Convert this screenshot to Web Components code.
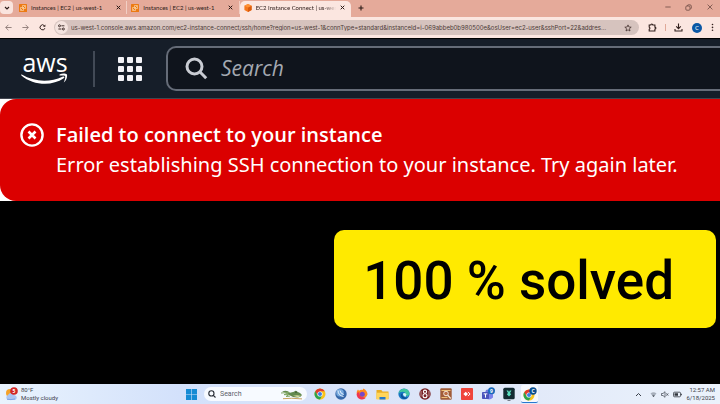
<!DOCTYPE html>
<html lang="en">
<head>
<meta charset="utf-8">
<title>EC2 Instance Connect | us-west-1</title>
<style>
  html, body {
    margin: 0;
    height: 100%;
    background: #000;
    overflow: hidden;
  }
</style>
</head>
<body>
<app-screen></app-screen>

<script>
  const screenTemplate = {
    template: `
    <style>
      :host {
        display: flex;
        flex-direction: column;
        min-height: 100vh;
        background: #000;
        font-family: "Noto Sans", "Open Sans", sans-serif;
      }
      main {
        flex: 1;
        display: flex;
        flex-direction: column;
      }
      solved-banner {
        align-self: flex-end;
        margin: 29px 4px 0 0;
      }
    </style>
    <tab-strip>
      <browser-tab>Instances | EC2 | us-west-1</browser-tab>
      <browser-tab>Instances | EC2 | us-west-1</browser-tab>
      <browser-tab active>EC2 Instance Connect | us-west-1</browser-tab>
    </tab-strip>
    <browser-toolbar></browser-toolbar>
    <console-header></console-header>
    <main>
      <error-flash>
        <span slot="title">Failed to connect to your instance</span>
        Error establishing SSH connection to your instance. Try again later.
      </error-flash>
      <solved-banner>100 % solved</solved-banner>
    </main>
    <task-bar></task-bar>
    `
  };

  const buttonStyle = `
      button {
        display: grid;
        place-items: center;
        padding: 0;
        border: 0;
        background: none;
        color: inherit;
        font: inherit;
        flex: none;
      }
      svg { display: block; }
  `;

  const tabStripTemplate = {
    template: `
    <style>
      ${buttonStyle}
      :host {
        display: flex;
        align-items: stretch;
        height: 17px;
        background: #e5aa9a;
        color: #2b1a17;
      }
      .search-tabs {
        width: 13px;
        height: 13px;
        border-radius: 4px;
        background: #fae4de;
        margin: 1px 2px 0 0;
      }
      .tabs {
        display: flex;
        flex: 0 1 336px;
        min-width: 0;
      }
      .new-tab { width: 20px; margin-top: -2px; }
      .window-buttons {
        display: flex;
        margin-left: auto;
        height: 14px;
        color: #6c4a42;
      }
      .window-buttons button { width: 21px; }
    </style>
    <button class="search-tabs" aria-label="Search tabs">
      <svg width="6" height="6" viewBox="0 0 6 6" fill="none" stroke="currentColor" stroke-width="1.1"><path d="M1 2l2 2 2-2"/></svg>
    </button>
    <div class="tabs"><slot></slot></div>
    <button class="new-tab" aria-label="New tab">
      <svg width="6" height="6" viewBox="0 0 6 6" stroke="currentColor" stroke-width="1.1"><path d="M3 .5v5M.5 3h5"/></svg>
    </button>
    <div class="window-buttons">
      <button aria-label="Minimize"><svg width="6" height="6" viewBox="0 0 6 6" stroke="currentColor" stroke-width=".8"><path d="M.3 3h5.4"/></svg></button>
      <button aria-label="Restore"><svg width="7" height="7" viewBox="0 0 7 7" fill="none" stroke="currentColor" stroke-width=".8"><rect x=".8" y="2" width="4.2" height="4.2" rx="1"/><path d="M2.4 1.8q0-1 1-1h1.4q1.6 0 1.6 1.6v1.4q0 1-1 1"/></svg></button>
      <button aria-label="Close window"><svg width="6" height="6" viewBox="0 0 6 6" stroke="currentColor" stroke-width=".8"><path d="M.6.6l4.8 4.8M5.4.6L.6 5.4"/></svg></button>
    </div>
    `
  };

  const browserTabTemplate = {
    template: `
    <style>
      ${buttonStyle}
      :host {
        display: flex;
        align-items: center;
        flex: 1 1 0;
        min-width: 0;
        box-sizing: border-box;
        height: 13px;
        margin-top: 1px;
        padding: 0 5px 0 4px;
        gap: 4px;
        border-right: 1px solid #f2cfc5;
        font: 6px Lato, sans-serif;
      }
      :host([active]) {
        height: 16px;
        padding-bottom: 3px;
        border-right: 0;
        border-radius: 5px 5px 0 0;
        background: #fbe6e0;
      }
      .title {
        flex: 1;
        min-width: 0;
        overflow: hidden;
        white-space: nowrap;
      }
      :host([active]) .title {
        mask-image: linear-gradient(to right, #000 85%, transparent);
      }
      .cube, :host([active]) .chip { display: none; }
      :host([active]) .cube { display: block; }
      .icon { flex: none; }
      .close { width: 6px; }
    </style>
    <svg class="icon chip" width="8" height="8" viewBox="0 0 8 8"><rect width="8" height="8" rx=".6" fill="#ec7a12"/><path d="M1.5 6.5v-3h3v3zM3.5 3.5v-2h3v3h-2M2 6l4-4" fill="none" stroke="#ffe2bd" stroke-width=".6"/></svg>
    <svg class="icon cube" width="8" height="8" viewBox="0 0 8 8"><path d="M4 0l3.600 1.800v4.300L4 8 .4 6.100V1.800z" fill="#f5761c"/><path d="M4 3.600l3.600-1.800v4.300L4 8z" fill="#d95b0e"/><path d="M4 0l3.600 1.800L4 3.600.4 1.800z" fill="#ff9236"/></svg>
    <span class="title"><slot></slot></span>
    <button class="close" aria-label="Close tab">
      <svg width="5" height="5" viewBox="0 0 5 5" stroke="currentColor" stroke-width="1"><path d="M.7.7l3.6 3.6M4.3.7L.7 4.3"/></svg>
    </button>
    `
  };

  const toolbarTemplate = {
    template: `
    <style>
      ${buttonStyle}
      :host {
        display: flex;
        align-items: center;
        height: 21px;
        padding-right: 1px;
        background: #fbe6e0;
        border-bottom: 1px solid #000;
        color: #33211e;
      }
      .nav { width: 17px; }
      .faded { color: #7d6b67; }
      .address {
        display: flex;
        align-items: center;
        flex: 1;
        min-width: 0;
        height: 15px;
        margin: 0 4px 0 3px;
        padding: 0 7px 0 1px;
        gap: 3px;
        border-radius: 8px;
        background: #d6c3be;
      }
      .site-info {
        width: 13px;
        height: 13px;
        border-radius: 50%;
        background: #f4e3de;
      }
      input {
        flex: 1;
        min-width: 0;
        padding: 0;
        border: 0;
        outline: 0;
        background: none;
        color: #4c3a36;
        font: 6px Inter, sans-serif;
        text-overflow: ellipsis;
      }
      .tool { width: 19px; }
      hr {
        width: 1px;
        height: 7px;
        margin: 0 3px;
        border: 0;
        background: #e0a999;
      }
      .avatar {
        width: 10px;
        height: 10px;
        margin: 0 4px;
        border-radius: 50%;
        background: #0b57a4;
        color: #fff;
        font: 6px "Noto Sans", sans-serif;
        line-height: 10px;
      }
      .menu { width: 13px; }
    </style>
    <button class="nav faded" aria-label="Back"><svg width="7" height="7" viewBox="0 0 7 7" fill="none" stroke="currentColor" stroke-width=".8"><path d="M6.6 3.5H.8M3.4.8L.7 3.5l2.7 2.7"/></svg></button>
    <button class="nav faded" aria-label="Forward"><svg width="7" height="7" viewBox="0 0 7 7" fill="none" stroke="currentColor" stroke-width=".8"><path d="M.4 3.5h5.8M3.6.8l2.7 2.7-2.7 2.7"/></svg></button>
    <button class="nav" aria-label="Reload"><svg width="7" height="7" viewBox="0 0 7 7" fill="none" stroke="currentColor" stroke-width="1"><path d="M5.900 4.200a2.500 2.500 0 1 1-.5-2.500"/><path d="M6.400.4v2.400H4z" fill="currentColor" stroke="none"/></svg></button>
    <div class="address">
      <button class="site-info" aria-label="View site information"><svg width="7" height="7" viewBox="0 0 7 7" fill="none" stroke="currentColor" stroke-width=".9"><circle cx="1.5" cy="1.8" r="1"/><path d="M3.4 1.8h3M.4 5h3"/><circle cx="5.4" cy="5" r="1"/></svg></button>
      <input type="text" aria-label="Address" readonly value="us-west-1.console.aws.amazon.com/ec2-instance-connect/ssh/home?region=us-west-1&amp;connType=standard&amp;instanceId=i-069abbeb0b980500e&amp;osUser=ec2-user&amp;sshPort=22&amp;addres...">
      <button aria-label="Bookmark this page"><svg width="8" height="8" viewBox="0 0 8 8" fill="none" stroke="currentColor" stroke-width=".7"><path d="M4 .9l.9 2.1 2.3.2-1.8 1.5.6 2.3-2-1.2L2 7l.6-2.3L.8 3.2 3.1 3z"/></svg></button>
    </div>
    <button class="tool" aria-label="Extensions"><svg width="9" height="9" viewBox="0 0 9 9" fill="none" stroke="currentColor" stroke-width="1.100"><path d="M1.200 2h1.600a1 1 0 0 1 2 0h2.100v2.100a1 1 0 0 1 0 2v1.900H1.200V6.300a1.200 1.200 0 0 0 0-2.200z"/></svg></button>
    <hr>
    <button class="tool" aria-label="Downloads"><svg width="9" height="9" viewBox="0 0 9 9" fill="none" stroke="currentColor" stroke-width="1.100"><path d="M4.500.5v5M2.200 3.300l2.300 2.300 2.300-2.300M1 6v2h7V6"/></svg></button>
    <button class="avatar" aria-label="Profile">C</button>
    <button class="menu" aria-label="Menu"><svg width="3" height="9" viewBox="0 0 3 9" fill="currentColor"><circle cx="1.500" cy="1.500" r=".8"/><circle cx="1.500" cy="4.400" r=".8"/><circle cx="1.500" cy="7.300" r=".8"/></svg></button>
    `
  };

  const consoleHeaderTemplate = {
    template: `
    <style>
      ${buttonStyle}
      :host {
        display: flex;
        align-items: center;
        height: 59px;
        padding-left: 21px;
        background: #161e29;
        border-bottom: 1px solid #424650;
        color: #fff;
      }
      .logo {
        display: flex;
        flex-direction: column;
        align-items: center;
        width: 48px;
        color: #fff;
        text-decoration: none;
        font: 500 25px "Open Sans", "Noto Sans", sans-serif;
        line-height: 20px;
      }
      .logo svg { margin-top: 1px; }
      .divider {
        width: 2px;
        height: 36px;
        margin: 0 22px 0 24px;
        background: #424a56;
      }
      .search {
        display: flex;
        align-items: center;
        flex: 1;
        min-width: 0;
        height: 41px;
        margin: 0 0 1px 23px;
        padding-left: 17px;
        gap: 13px;
        border: 2px solid #656c78;
        border-right: 0;
        border-radius: 10px 0 0 10px;
        background: #0f141c;
      }
      input {
        flex: 1;
        min-width: 0;
        padding: 0;
        border: 0;
        outline: 0;
        background: none;
        color: #fff;
        font: italic 21px "Open Sans", "Noto Sans", sans-serif;
      }
      input::placeholder { color: #a4a9b1; opacity: 1; }
    </style>
    <a class="logo" href="#" aria-label="AWS home">
      aws
      <svg width="48" height="12" viewBox="0 0 48 12"><path d="M.8 1.500C13 9 29 9.500 41.500 3.700c1.800-.7 2.600.5 1.200 1.600C31 13.500 12 12.500.4 2.400c-.5-.6-.2-1.200.4-.9z" fill="#fff"/><path d="M38.500 1.500c2.800-1.400 6.300-1 7.200-.2 1 1.200.2 5.900-2.900 8.300 1.300-3 1.700-5.700 1.300-6.500-.6-.7-3-.8-5.600-.6z" fill="#fff"/></svg>
    </a>
    <div class="divider"></div>
    <button aria-label="Services">
      <svg width="26" height="26" viewBox="0 0 26 26" fill="#f3f3f7"><g id="row"><rect x="1" y="1" width="6" height="6" rx="1"/><rect x="10" y="1" width="6" height="6" rx="1"/><rect x="19" y="1" width="6" height="6" rx="1"/></g><use href="#row" y="9"/><use href="#row" y="18"/></svg>
    </button>
    <label class="search">
      <svg width="23" height="23" viewBox="0 0 23 23" fill="none" stroke="#c9ccd3" stroke-width="3"><circle cx="9.500" cy="9.500" r="7.500"/><path d="M14.800 14.800l6.400 6.400"/></svg>
      <input type="search" placeholder="Search" aria-label="Search">
    </label>
    `
  };

  const errorFlashTemplate = {
    template: `
    <style>
      :host {
        display: block;
        background: #fff;
      }
      .flash {
        display: flex;
        align-items: flex-start;
        gap: 12px;
        padding: 21px 20px;
        border-radius: 16px 0 0 16px;
        background: #db0000;
        color: #fff;
        font-size: 20px;
        line-height: 30px;
      }
      svg { flex: none; margin-top: 3px; }
      .title { display: block; font-family: "Open Sans", "Noto Sans", sans-serif; font-weight: 600; }
      .text { margin: 0; }
      .title, .text { white-space: nowrap; }
    </style>
    <div class="flash" role="alert">
      <svg width="24" height="24" viewBox="0 0 24 24" fill="none" stroke="#fff"><circle cx="12" cy="12" r="10.600" stroke-width="2.400"/><path d="M8.500 8.500l7 7M15.500 8.500l-7 7" stroke-width="2.600"/></svg>
      <div>
        <strong class="title"><slot name="title"></slot></strong>
        <p class="text"><slot></slot></p>
      </div>
    </div>
    `
  };

  const solvedBannerTemplate = {
    template: `
    <style>
      :host {
        display: block;
        padding: 19px 42px 15px 29px;
        border-radius: 10px;
        background: #ffea00;
        color: #000;
        font: 500 53px Roboto, sans-serif;
        line-height: 64px;
        white-space: nowrap;
      }
    </style>
    <slot></slot>
    `
  };

  const chromeShapes = `
      <circle cx="6" cy="6" r="5.500" fill="#f9c31c"/>
      <path d="M1.200 3.300A5.500 5.500 0 0 1 10.800 3.300H6L3.700 7.400z" fill="#e23b2e"/>
      <path d="M1.200 3.300A5.500 5.500 0 0 0 6 11.500L8.300 7.300 3.700 7.400z" fill="#2da44e"/>
      <circle cx="6" cy="6" r="2.600" fill="#fff"/><circle cx="6" cy="6" r="2" fill="#3b7de8"/>`;

  const taskBarTemplate = {
    template: `
    <style>
      ${buttonStyle}
      :host {
        display: grid;
        grid-template-columns: 1fr auto 1fr;
        align-items: center;
        height: 20px;
        padding: 0 5px;
        background: linear-gradient(to right, #e9f3fd, #d3e1fb 25%, #dde5f8 60%, #ebf2fb);
        color: #3a404a;
        font: 6px Roboto, sans-serif;
        line-height: 8px;
      }
      .weather {
        display: flex;
        align-items: center;
        gap: 3px;
        text-align: left;
        justify-self: start;
      }
      .weather span { display: block; }
      .apps { display: flex; gap: 4px; padding-left: 1px; }
      .apps button {
        width: 17px;
        height: 18px;
        border-radius: 2px;
      }
      .apps .current { background: #f6f8fd; border-bottom: 1px solid #2878cf; }
      .search {
        display: flex;
        align-items: center;
        align-self: center;
        box-sizing: border-box;
        width: 103px;
        height: 14px;
        padding: 0 4px;
        gap: 4px;
        border-radius: 7px;
        background: #f7faff;
      }
      input {
        flex: 1;
        min-width: 0;
        padding: 0;
        border: 0;
        outline: 0;
        background: none;
        font: 7px Roboto, sans-serif;
      }
      input::placeholder { color: #5a5f69; opacity: 1; }
      .tray {
        display: flex;
        align-items: center;
        justify-self: end;
        gap: 4px;
      }
      .overflow { margin-right: 4px; }
      .clock { text-align: right; }
      .clock time { display: block; }
      text { font: 700 5px "Noto Sans", sans-serif; fill: #fff; text-anchor: middle; }
    </style>
    <button class="weather">
      <svg width="13" height="14" viewBox="0 0 13 14"><circle cx="5" cy="6" r="4" fill="#f5a32a"/><path d="M3 13a2.700 2.700 0 0 1 0-5 3.600 3.600 0 0 1 6.600.3A2.400 2.400 0 0 1 10 13z" fill="#a9c5f3"/><path d="M2 12.200q4 1 8-.3" stroke="#7da4e5" fill="none"/><circle cx="9" cy="4" r="3.800" fill="#d12727"/><text x="9" y="6">5</text></svg>
      <span><span>80°F</span><span>Mostly cloudy</span></span>
    </button>
    <nav class="apps">
      <button aria-label="Start"><svg width="11" height="11" viewBox="0 0 11 11" fill="#168bd4"><path d="M0 0h5.200v5.200H0zM5.800 0H11v5.200H5.800zM0 5.800h5.200V11H0zM5.800 5.800H11V11H5.800z"/></svg></button>
      <label class="search">
        <svg width="8" height="8" viewBox="0 0 8 8" fill="none" stroke="#252a33" stroke-width="1.100"><circle cx="3.400" cy="3.400" r="2.600"/><path d="M5.300 5.300l2.200 2.200"/></svg>
        <input type="search" placeholder="Search" aria-label="Search apps">
        <svg width="22" height="11" viewBox="0 0 22 11"><path d="M1 2.500q5-2 8 1.200l4-.9q2-2 3.400 0 3 .8 4.600 3.200-1 2-4 2.500-5 .3-8-2Q5 3 1 2.500z" fill="#648a50"/><path d="M0 4l8-.5-5 2.200 5-.2-3 2 4-.4" fill="none" stroke="#80a765"/><path d="M12 6.700q4-1 8 .1l-3 1.400z" fill="#d7dba0"/><path d="M2 9.700q8-1 19 .2" stroke="#c8a25e" fill="none"/><circle cx="15" cy="3.200" r=".6" fill="#24351e"/></svg>
      </label>
      <button aria-label="Chrome"><svg width="12" height="12" viewBox="0 0 12 12">${chromeShapes}</svg></button>
      <button aria-label="Remote"><svg width="12" height="12" viewBox="0 0 12 12"><circle cx="6" cy="6" r="5.700" fill="#3768a9"/><circle cx="5" cy="4.700" r="3.800" fill="#78a9dd"/><path d="M3 2.500q.2 5.200 5.500 6M5 2.500q.3 3 3.700 4" fill="none" stroke="#e3f1ff" stroke-width="1"/></svg></button>
      <button aria-label="Firefox"><svg width="12" height="12" viewBox="0 0 12 12"><path d="M1 3l1-1.500 1 1.200Q5 1.500 6.500 2L7.500.5Q11.600 3 11.500 6.500A5.500 5.500 0 1 1 1 3z" fill="#ff8a1e"/><path d="M.6 6.500Q1 3.500 3.500 4.500q-1 5 6.500 5.300A5.500 5.500 0 0 1 .6 6.500z" fill="#ef3550"/><circle cx="6.300" cy="6.300" r="2.500" fill="#7646c9"/></svg></button>
      <button aria-label="File Explorer"><svg width="13" height="11" viewBox="0 0 13 11"><path d="M.5 1h4.800l1.200 1.400h6V10H.5z" fill="#e9ac22"/><path d="M.5 3.700h12v6.800H.5z" fill="#ffd55a"/><path d="M3.500 8h6v2.500h-6z" fill="#2779c9"/></svg></button>
      <button aria-label="Edge"><svg width="12" height="12" viewBox="0 0 12 12"><circle cx="6" cy="6" r="5.600" fill="#1778c3"/><path d="M.5 5.500C1.500-.8 10.600-1 11.500 5q.3 3-2.700 3-2.600 0-1.400-2Q7.300 3.700 4.800 3.700 1.500 3.700.5 5.500z" fill="#40c5a0"/><path d="M4.500 5.300Q3.500 9.500 9.500 9.800 5.500 12.800 3.200 9 2 6 4.500 5.300z" fill="#0d4f99"/><path d="M5 5.500q-.3 3 3 3.300h2.500q-4 .7-2-2.200Q7.500 4 5 5.500z" fill="#d8f3f8"/></svg></button>
      <button aria-label="Recorder"><svg width="12" height="12" viewBox="0 0 12 12"><circle cx="6" cy="6" r="5.700" fill="#762025"/><circle cx="6" cy="3.700" r="1.600" fill="none" stroke="#fff" stroke-width="1.100"/><circle cx="6" cy="7.700" r="2" fill="none" stroke="#fff" stroke-width="1.100"/><path d="M2 3v5.500M10 3v5.500" stroke="#d7a9a9" stroke-width=".8"/></svg></button>
      <button aria-label="Image tool"><svg width="12" height="12" viewBox="0 0 12 12"><rect x=".3" y=".3" width="11.400" height="11.400" rx="1" fill="#a05b38"/><path d="M1.500 2.500h9M1.500 9.500h6" stroke="#efc078" stroke-width="1.200"/><circle cx="6" cy="5.500" r="2.300" fill="#bd6d45" stroke="#f3e9dd"/><path d="M7.700 7.200l3 3.300" stroke="#f3e9dd" stroke-width="1.300"/></svg></button>
      <button aria-label="AnyDesk"><svg width="12" height="12" viewBox="0 0 12 12"><rect width="12" height="12" rx=".7" fill="#ef443b"/><path d="M4.700 3.700L7 6 4.700 8.300 2.400 6z" fill="#fff"/><path d="M7 3.900L9.100 6 7 8.100" fill="none" stroke="#fff" stroke-width="1"/></svg></button>
      <button aria-label="Teams"><svg width="14" height="14" viewBox="0 0 14 14"><circle cx="6.500" cy="4.500" r="2" fill="#7378d8"/><path d="M4 6h8v4.500q-4 4-8 0z" fill="#7b83eb"/><rect x="1" y="5" width="7" height="7" rx=".8" fill="#4b53bc"/><path d="M2.700 6.900h3.600M4.500 7v3.600" stroke="#fff"/><circle cx="10.500" cy="3.700" r="3.500" fill="#1769ba"/><text x="10.500" y="5.500">9</text></svg></button>
      <button aria-label="Filmora"><svg width="12" height="14" viewBox="0 0 12 14"><rect x=".3" y=".8" width="11.400" height="11.400" rx="1.500" fill="#132b32"/><path d="M3.500 3.500h1.700L6 5l.8-1.500h1.700L7 6l1.200 1.300L6 9.500 3.800 7.300 5 6z" fill="#5be0c1"/><path d="M4.500 13.500h3" stroke="#777f8c"/></svg></button>
      <button class="current" aria-label="Chrome, profile C"><svg width="14" height="14" viewBox="0 0 14 14"><g transform="translate(0 2)">${chromeShapes}</g><circle cx="10" cy="4" r="3.700" fill="#0a4f91"/><text x="10" y="6">C</text></svg></button>
    </nav>
    <div class="tray">
      <button class="overflow" aria-label="Show hidden icons"><svg width="7" height="5" viewBox="0 0 7 5" fill="none" stroke="currentColor"><path d="M1 4l2.500-2.500L6 4"/></svg></button>
      <button aria-label="Network"><svg width="7" height="7" viewBox="0 0 7 7"><path d="M.5 2.500q3-2.300 6 0L3.500 6z" fill="#a7afbb"/><path d="M2.200 4.500h2.600L3.500 6z" fill="#3a404a"/></svg></button>
      <button aria-label="Volume muted"><svg width="8" height="7" viewBox="0 0 8 7" fill="none" stroke="currentColor" stroke-width=".7"><path d="M.5 2.500H2L4 .7v5.600L2 4.500H.5zM5.300 2.300l2 2.400M7.300 2.300l-2 2.400"/></svg></button>
      <button aria-label="Battery"><svg width="9" height="7" viewBox="0 0 9 7"><rect x=".5" y="1.200" width="7" height="4.600" rx="1" fill="none" stroke="#30353d" stroke-width=".8"/><path d="M1.500 2.200h3.500v2.600H1.500zM8 2.700h.8v1.600H8z" fill="#30353d"/></svg></button>
      <div class="clock"><time>12:57 AM</time><time>6/18/2025</time></div>
    </div>
    `
  };

  class TemplateElement extends HTMLElement {
    constructor(source) {
      super();
      this.attachShadow({ mode: "open" });
      this.shadowRoot.innerHTML = source.template;
    }
  }

  class BrowserTab extends TemplateElement {
    static TAG = "browser-tab";
    constructor() { super(browserTabTemplate); }
  }

  class TabStrip extends TemplateElement {
    static TAG = "tab-strip";
    constructor() { super(tabStripTemplate); }
  }

  class BrowserToolbar extends TemplateElement {
    static TAG = "browser-toolbar";
    constructor() { super(toolbarTemplate); }
  }

  class ConsoleHeader extends TemplateElement {
    static TAG = "console-header";
    constructor() { super(consoleHeaderTemplate); }
  }

  class ErrorFlash extends TemplateElement {
    static TAG = "error-flash";
    constructor() { super(errorFlashTemplate); }
  }

  class SolvedBanner extends TemplateElement {
    static TAG = "solved-banner";
    constructor() { super(solvedBannerTemplate); }
  }

  class TaskBar extends TemplateElement {
    static TAG = "task-bar";
    constructor() { super(taskBarTemplate); }
  }

  class AppScreen extends TemplateElement {
    static TAG = "app-screen";
    constructor() { super(screenTemplate); }
  }

  [BrowserTab, TabStrip, BrowserToolbar, ConsoleHeader, ErrorFlash, SolvedBanner, TaskBar, AppScreen]
    .forEach(element => customElements.define(element.TAG, element));
</script>
</body>
</html>
